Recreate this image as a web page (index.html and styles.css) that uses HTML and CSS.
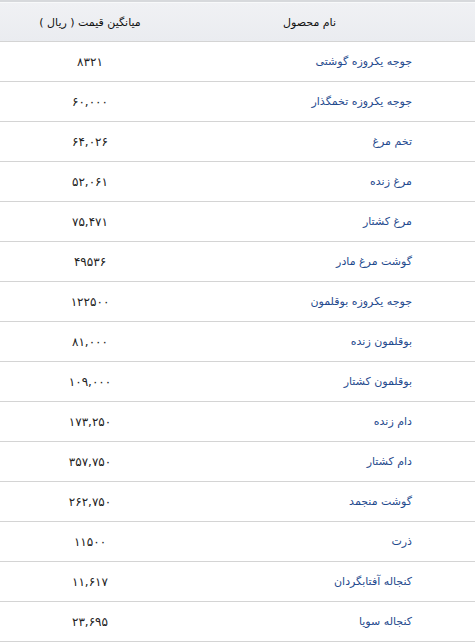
FILE: index.html
```html
<!DOCTYPE html>
<html lang="fa" dir="rtl">
<head>
<meta charset="utf-8">
<link rel="stylesheet" href="styles.css">
</head>
<body>
<div class="table">
  <div class="row head">
    <div class="cell name">نام محصول</div>
    <div class="cell price">میانگین قیمت ( ریال )</div>
  </div>
  <div class="row"><div class="cell name">جوجه یکروزه گوشتی</div><div class="cell price">۸۳۲۱</div></div>
  <div class="row"><div class="cell name">جوجه یکروزه تخمگذار</div><div class="cell price">۶۰,۰۰۰</div></div>
  <div class="row"><div class="cell name">تخم مرغ</div><div class="cell price">۶۴,۰۲۶</div></div>
  <div class="row"><div class="cell name">مرغ زنده</div><div class="cell price">۵۲,۰۶۱</div></div>
  <div class="row"><div class="cell name">مرغ کشتار</div><div class="cell price">۷۵,۴۷۱</div></div>
  <div class="row"><div class="cell name">گوشت مرغ مادر</div><div class="cell price">۴۹۵۳۶</div></div>
  <div class="row"><div class="cell name">جوجه یکروزه بوقلمون</div><div class="cell price">۱۲۲۵۰۰</div></div>
  <div class="row"><div class="cell name">بوقلمون زنده</div><div class="cell price">۸۱,۰۰۰</div></div>
  <div class="row"><div class="cell name">بوقلمون کشتار</div><div class="cell price">۱۰۹,۰۰۰</div></div>
  <div class="row"><div class="cell name">دام زنده</div><div class="cell price">۱۷۳,۲۵۰</div></div>
  <div class="row"><div class="cell name">دام کشتار</div><div class="cell price">۳۵۷,۷۵۰</div></div>
  <div class="row"><div class="cell name">گوشت منجمد</div><div class="cell price">۲۶۲,۷۵۰</div></div>
  <div class="row"><div class="cell name">ذرت</div><div class="cell price">۱۱۵۰۰</div></div>
  <div class="row"><div class="cell name">کنجاله آفتابگردان</div><div class="cell price">۱۱,۶۱۷</div></div>
  <div class="row"><div class="cell name">کنجاله سویا</div><div class="cell price">۲۳,۶۹۵</div></div>
</div>
</body>
</html>
```
FILE: styles.css
```css
html, body {
  margin: 0;
  padding: 0;
  background: #ffffff;
}
body {
  font-family: "DejaVu Sans", Tahoma, sans-serif;
  font-size: 11px;
}
.table {
  width: 475px;
  border-top: 2px solid #d7d9dc;
}
.row {
  display: grid;
  grid-template-columns: 1fr 180px;
  height: 39px;
  border-bottom: 1px solid #d4d4d4;
  align-items: center;
}
.head {
  height: 38px;
  border-top: 1px solid #f8f9fa;
  background: linear-gradient(#f0f1f4, #eaecf0);
}
.cell.name {
  text-align: right;
  padding-right: 63px;
  color: #1f4a8e;
}
.cell.price {
  text-align: center;
  color: #222222;
  font-size: 12px;
  letter-spacing: 0.6px;
}
.head .cell.name {
  padding-right: 139px;
  color: #111111;
}
.head .cell.price {
  color: #111111;
  font-size: 11px;
  letter-spacing: 0.2px;
}
```
